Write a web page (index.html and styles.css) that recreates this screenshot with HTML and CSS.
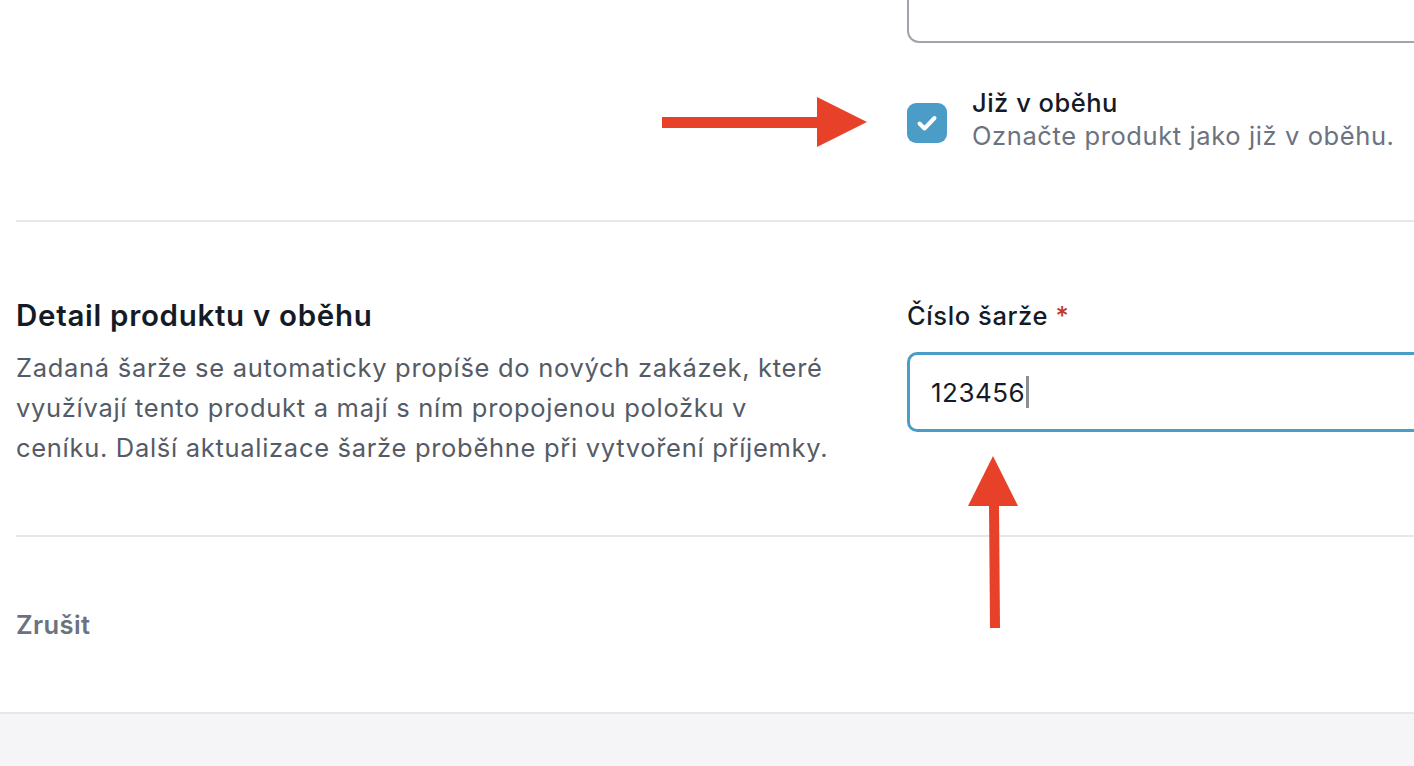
FILE: index.html
```html
<!DOCTYPE html>
<html lang="cs">
<head>
<meta charset="utf-8">
<link rel="stylesheet" href="styles.css">
</head>
<body>
<div class="page">
  <section class="section section-top">
    <div class="col-left"></div>
    <div class="col-right">
      <div class="prev-input"></div>
      <div class="check-row">
        <span class="checkbox">
          <svg viewBox="0 0 40 40" width="40" height="40"><path d="M12.5 20.5 L17.5 25.5 L27.5 15" fill="none" stroke="#fff" stroke-width="4" stroke-linecap="round" stroke-linejoin="round"/></svg>
        </span>
        <div class="check-text">
          <div class="check-title">Již v oběhu</div>
          <div class="check-desc">Označte produkt jako již v oběhu.</div>
        </div>
      </div>
    </div>
  </section>
  <section class="section section-detail">
    <div class="col-left">
      <h2 class="heading">Detail produktu v oběhu</h2>
      <p class="desc">Zadaná šarže se automaticky propíše do nových zakázek, které využívají tento produkt a mají s ním propojenou položku v ceníku. Další aktualizace šarže proběhne při vytvoření příjemky.</p>
    </div>
    <div class="col-right">
      <label class="field-label">Číslo šarže <span class="req">*</span></label>
      <div class="input"><span class="input-value">123456</span><span class="caret"></span></div>
    </div>
  </section>
  <section class="actions">
    <span class="cancel">Zrušit</span>
  </section>
</div>
<footer class="footer"></footer>

<svg class="arrow arrow-right" width="210" height="54" viewBox="0 0 210 54">
  <rect x="0" y="20" width="158" height="11" fill="#e8412a"/>
  <polygon points="155,0 205,25 155,50" fill="#e8412a"/>
</svg>
<svg class="arrow arrow-up" width="54" height="176" viewBox="0 0 54 176">
  <polygon points="25,0 50,50 0,50" fill="#e8412a"/>
  <polygon points="21,48 31,48 32,172 22,172" fill="#e8412a"/>
</svg>
</body>
</html>
```

FILE: styles.css
```css
* { box-sizing: border-box; }
html, body { margin: 0; padding: 0; }
body {
  width: 1414px;
  height: 766px;
  overflow: hidden;
  background: #fff;
  font-family: "Inter", "Lato", sans-serif;
  color: #111827;
  position: relative;
}
.page {
  padding-left: 16px;
  background: #fff;
}
.section {
  display: grid;
  grid-template-columns: 891px 1fr;
  border-bottom: 2px solid #e5e7eb;
}
.section-top {
  height: 222px;
}
.col-right {
  min-width: 0;
}
.prev-input {
  height: 43px;
  margin-right: -20px;
  border: 2px solid #a1a5ab;
  border-top: 0;
  border-radius: 0 0 12px 12px;
}
.check-row {
  display: flex;
  align-items: flex-start;
  gap: 25px;
  margin-top: 45px;
}
.checkbox {
  width: 40px;
  height: 40px;
  margin-top: 15px;
  border-radius: 9px;
  background: #4b9dc8;
  display: flex;
  flex-shrink: 0;
}
.check-title {
  font-size: 25.5px;
  font-weight: 500;
  line-height: 30px;
  letter-spacing: 0.5px;
  color: #151b26;
}
.check-desc {
  font-size: 25.5px;
  line-height: 36px;
  color: #6b7280;
  white-space: nowrap;
  letter-spacing: 0.6px;
}
.section-detail {
  height: 315px;
}
.section-detail .col-left {
  padding-top: 74px;
}
.heading {
  margin: 0;
  font-size: 29.5px;
  font-weight: 600;
  line-height: 38px;
  letter-spacing: 0.7px;
  color: #151b26;
}
.desc {
  margin: 14px 0 0;
  font-size: 25.5px;
  line-height: 40px;
  color: #545b66;
  max-width: 815px;
  letter-spacing: 0.7px;
}
.section-detail .col-right {
  padding-top: 79px;
}
.field-label {
  display: block;
  font-size: 25.5px;
  font-weight: 500;
  line-height: 30px;
  letter-spacing: 0.6px;
  color: #151b26;
}
.req { color: #c0392b; }
.input {
  margin-top: 21px;
  height: 80px;
  margin-right: -20px;
  border: 3px solid #4b9dc8;
  border-radius: 10px;
  display: flex;
  align-items: center;
  padding-left: 21px;
}
.input-value {
  font-size: 26px;
  letter-spacing: 0.5px;
  color: #151b26;
}
.caret {
  width: 3px;
  height: 32px;
  background: #8a8f96;
  margin-left: 1px;
}
.actions {
  height: 175px;
  display: flex;
  align-items: center;
}
.cancel {
  font-size: 25.5px;
  font-weight: 600;
  letter-spacing: 0.4px;
  color: #6b7280;
}
.footer {
  border-top: 2px solid #e5e7eb;
  background: #f5f5f7;
  height: 60px;
}
.arrow {
  position: absolute;
}
.arrow-right {
  left: 662px;
  top: 97px;
}
.arrow-up {
  left: 968px;
  top: 456px;
}
```
